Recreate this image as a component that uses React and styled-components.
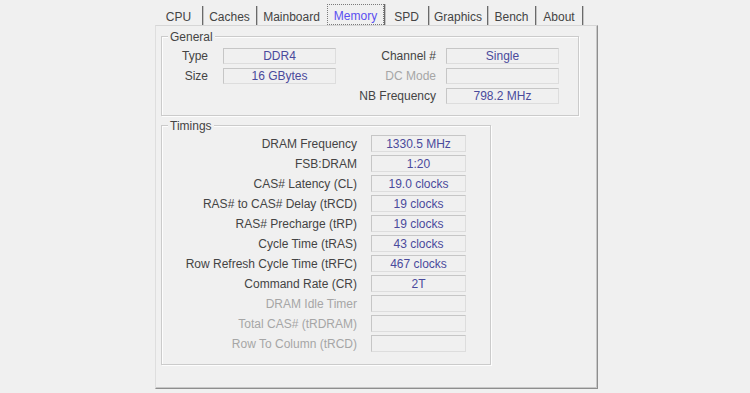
import React from 'react';
import styled, { createGlobalStyle } from 'styled-components';

const GlobalStyle = createGlobalStyle`
  html, body {
    margin: 0;
    background: #f0f0f0;
  }
  body {
    font-family: 'Liberation Sans', Arial, sans-serif;
    font-size: 12px;
    color: #3c3c3c;
  }
`;

const Page = styled.div`
  width: 750px;
  height: 393px;
  overflow: hidden;
  padding: 6px 0 0 155px;
  box-sizing: border-box;
`;

const Window = styled.div`
  width: 443px;
`;

const TabBar = styled.div`
  display: flex;
  height: 19px;
  align-items: flex-end;
`;

const Tab = styled.div`
  box-sizing: border-box;
  width: ${(p) => p.$w}px;
  height: ${(p) => (p.$active ? 21 : 19)}px;
  display: flex;
  align-items: center;
  justify-content: center;
  padding-top: 3px;
  color: ${(p) => (p.$active ? '#5a4ff0' : '#444444')};
  border-right: ${(p) => (p.$edge ? '1px solid #6a6a6a' : 'none')};
  box-shadow: ${(p) => (p.$edge ? '1px 0 0 #c4c4c4' : 'none')};
  position: relative;
  z-index: ${(p) => (p.$active ? 2 : 1)};
`;

const Focus = styled.span`
  display: flex;
  align-items: center;
  justify-content: center;
  width: 100%;
  height: calc(100% + 3px);
  margin: -3px 0 0 1px;
  padding-top: 2px;
  box-sizing: border-box;
  border: 1px dotted #7a7a7a;
`;

const Panel = styled.div`
  box-sizing: border-box;
  height: 364px;
  border-top: 1px solid #d6d6d6;
  border-left: 1px solid #dedede;
  border-right: 1px solid #8e8e8e;
  border-bottom: 1px solid #8e8e8e;
  box-shadow: inset -1px -1px 0 #c8c8c8;
  padding: 10px 0 0 5px;
`;

const GroupBox = styled.div`
  position: relative;
  box-sizing: border-box;
  width: ${(p) => p.$w}px;
  height: ${(p) => p.$h}px;
  margin-bottom: 9px;
  border: 1px solid #cbcbcb;
  box-shadow: 1px 1px 0 #fdfdfd, inset 1px 1px 0 #fdfdfd;
  padding-top: ${(p) => p.$top}px;
`;

const Legend = styled.span`
  position: absolute;
  top: -7px;
  left: 6px;
  padding: 0 2px;
  background: #f0f0f0;
  line-height: 14px;
  color: #444444;
`;

const GeneralGrid = styled.div`
  display: grid;
  grid-template-columns: 61px 113px 110px 113px;
  grid-auto-rows: 16px;
  row-gap: 4px;
`;

const TimingGrid = styled.div`
  display: grid;
  grid-template-columns: 209px 95px;
  grid-auto-rows: 17px;
  row-gap: 3px;
`;

const Label = styled.div`
  text-align: right;
  align-self: center;
  white-space: nowrap;
  padding-right: ${(p) => p.$pr || 0}px;
  color: ${(p) => (p.$off ? '#a6a6a6' : '#444444')};
`;

const Field = styled.div`
  box-sizing: border-box;
  display: flex;
  align-items: center;
  justify-content: center;
  white-space: nowrap;
  color: #4a4a9c;
  border: 1px solid;
  border-color: #c6c6c6 #dddddd #dddddd #c6c6c6;
  background: #f0f0f0;
`;

const tabs = [
  ['CPU', 48, true],
  ['Caches', 54, true],
  ['Mainboard', 69, false],
  ['Memory', 59, true],
  ['SPD', 44, true],
  ['Graphics', 59, true],
  ['Bench', 48, true],
  ['About', 47, true],
];

const timings = [
  ['DRAM Frequency', '1330.5 MHz'],
  ['FSB:DRAM', '1:20'],
  ['CAS# Latency (CL)', '19.0 clocks'],
  ['RAS# to CAS# Delay (tRCD)', '19 clocks'],
  ['RAS# Precharge (tRP)', '19 clocks'],
  ['Cycle Time (tRAS)', '43 clocks'],
  ['Row Refresh Cycle Time (tRFC)', '467 clocks'],
  ['Command Rate (CR)', '2T'],
  ['DRAM Idle Timer', null],
  ['Total CAS# (tRDRAM)', null],
  ['Row To Column (tRCD)', null],
];

const App = () => (
  <Page>
    <GlobalStyle />
    <Window>
      <TabBar>
        {tabs.map(([name, w, edge]) => (
          <Tab key={name} $w={w} $edge={edge} $active={name === 'Memory'}>
            {name === 'Memory' ? <Focus>{name}</Focus> : name}
          </Tab>
        ))}
      </TabBar>

      <Panel>
        <GroupBox $w={418} $h={80} $top={11}>
          <Legend>General</Legend>
          <GeneralGrid>
            <Label $pr={15}>Type</Label>
            <Field>DDR4</Field>
            <Label $pr={10}>Channel #</Label>
            <Field>Single</Field>

            <Label $pr={15}>Size</Label>
            <Field>16 GBytes</Field>
            <Label $pr={10} $off>DC Mode</Label>
            <Field />

            <span />
            <span />
            <Label $pr={10}>NB Frequency</Label>
            <Field>798.2 MHz</Field>
          </GeneralGrid>
        </GroupBox>

        <GroupBox $w={330} $h={240} $top={9}>
          <Legend>Timings</Legend>
          <TimingGrid>
            {timings.map(([label, value]) => (
              <React.Fragment key={label}>
                <Label $pr={14} $off={value === null}>{label}</Label>
                <Field>{value}</Field>
              </React.Fragment>
            ))}
          </TimingGrid>
        </GroupBox>
      </Panel>
    </Window>
  </Page>
);

export default App;
